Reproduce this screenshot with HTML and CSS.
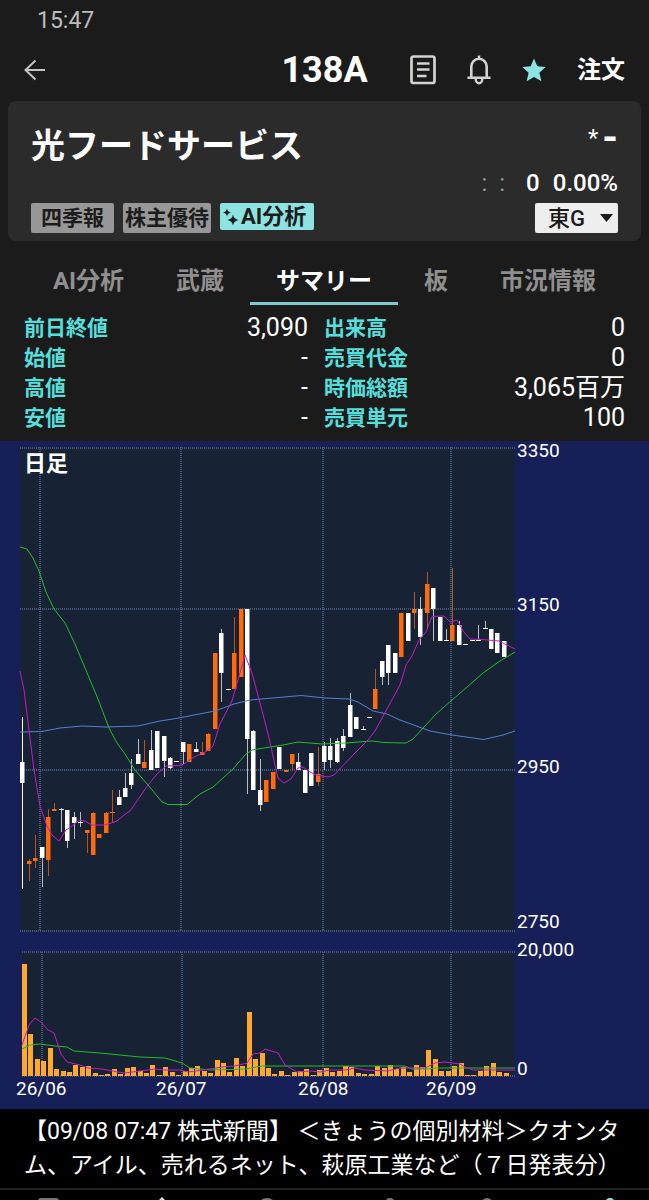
FILE: index.html
```html
<!DOCTYPE html>
<html lang="ja">
<head>
  <meta charset="UTF-8">
  <meta name="viewport" content="width=device-width, initial-scale=1">
  <title>138A 光フードサービス</title>
  <link rel="stylesheet" href="styles.css">
</head>
<body>
  <div class="status-bar">15:47</div>

  <header class="top-bar">
    <button class="icon-btn back-btn" aria-label="戻る">
      <svg width="22" height="22" viewBox="0 0 22 22"><path d="M21 11H1.5M11.500 1.500L1.500 11l10 9.500" fill="none" stroke="#c4c4c4" stroke-width="2"/></svg>
    </button>
    <h1 class="code">138A</h1>
    <div class="top-actions">
      <button class="icon-btn" aria-label="ニュース">
        <svg width="26" height="30" viewBox="0 0 26 30"><rect x="1.500" y="1.500" width="23" height="26.500" rx="2" fill="none" stroke="#d4d1d1" stroke-width="2.700"/><path d="M7 8.500h12.500M7 14.500h12.500M7 21h9.500" stroke="#d4d1d1" stroke-width="2.300"/></svg>
      </button>
      <button class="icon-btn" aria-label="アラート">
        <svg width="24" height="30" viewBox="0 0 24 30"><path d="M4.300 22V11.500a7.700 7.700 0 0 1 15.400 0V22M.5 22.800h23M12 .5v4" fill="none" stroke="#d4d1d1" stroke-width="2.600"/><path d="M8.700 24a3.300 4.200 0 0 0 6.600 0" fill="none" stroke="#d4d1d1" stroke-width="2.400"/></svg>
      </button>
      <button class="icon-btn" aria-label="お気に入り">
        <svg width="24" height="24" viewBox="0 0 24 24"><path d="M12 .5l3.300 7.700 8.400.8-6.300 5.700 2 8.600L12 18.900l-7.400 4.400 2-8.600L.3 9l8.400-.8z" fill="#8ce3e1"/></svg>
      </button>
      <button class="order-btn">注文</button>
    </div>
  </header>

  <section class="card">
    <div class="card-row">
      <h2 class="company">光フードサービス</h2>
      <div class="price"><span class="mark">*</span><span class="last">-</span></div>
    </div>
    <div class="change"><span class="time">:&nbsp; :</span><span>0</span><span>0.00%</span></div>
    <div class="card-row chips-row">
      <div class="chips">
        <button class="chip">四季報</button>
        <button class="chip chip-tight">株主優待</button>
        <button class="chip chip-ai">
          <svg width="16" height="18" viewBox="0 0 16 18"><path d="M4 .5Q4.500 4 8 4.500 4.500 5 4 8.500 3.500 5 0 4.500 3.500 4 4 .5zM10 6.500q.8 4.700 5.500 5.500-4.700.8-5.500 5.500-.8-4.700-5.500-5.500 4.700-.8 5.500-5.500z" fill="#1c1c1c"/></svg>AI分析
        </button>
      </div>
      <div class="market">
        <select aria-label="市場"><option>東G</option></select>
        <svg class="caret" width="13" height="8" viewBox="0 0 13 8"><path d="M0 0h13L6.500 8z" fill="#1c1c1c"/></svg>
      </div>
    </div>
  </section>

  <nav class="tabs">
    <button class="tab">AI分析</button>
    <button class="tab">武蔵</button>
    <button class="tab active">サマリー</button>
    <button class="tab">板</button>
    <button class="tab">市況情報</button>
  </nav>

  <div class="summary">
    <dl>
      <div><dt>前日終値</dt><dd>3,090</dd></div>
      <div><dt>始値</dt><dd>-</dd></div>
      <div><dt>高値</dt><dd>-</dd></div>
      <div><dt>安値</dt><dd>-</dd></div>
    </dl>
    <dl>
      <div><dt>出来高</dt><dd>0</dd></div>
      <div><dt>売買代金</dt><dd>0</dd></div>
      <div><dt>時価総額</dt><dd>3,065百万</dd></div>
      <div><dt>売買単元</dt><dd>100</dd></div>
    </dl>
  </div>

  <svg class="chart" viewBox="0 441 649 668">
    <rect class="plot" x="20" y="447" width="495" height="485"/>
    <rect class="plot" x="22" y="952" width="493" height="125"/>
    <path class="grid" d="M20 448H515M20 609H515M20 770H515M20 931H515M40 447V931M181 447V931M323 447V931M451 447V931"/>
    <path class="grid" d="M22 952H515M22 1076H515M42 952V1076M182 952V1076M323 952V1076M451 952V1076"/>
    <g id="candles"></g>
    <polyline class="line blue" points="20,732 42,731.500 60,728 82,726 106,727 138,726 160,721 176,718.500 215,711 234,704 250,700 301,695.500 325,698 349,699 358,702 373,711 387,714 400,720 430,731 452,735 484,739.500 503,735 515,731"/>
    <polyline class="line green" points="20,547 27,549 33,558 39,571 46,592 54,609 65,623 75,644 98,699 109,728 117,743 125,754 135,770 148,785 162,802 168,804.500 187,804.500 200,794 213,787 233,769 245,755 252,750 270,747 283,745 298,742 310,743 322,744 345,743 372,741 384,742.500 406,743 413,739 424,727 436,714 452,700 466,688 483,673 500,661 515,652"/>
    <polyline class="line magenta" points="20,671 24,690 28,722 34,770 40,806 47,826 52,835 59,841 66,830 72,826 79,820 85,821 92,825 105,825 117,821 124,815 130,811 148,785 157,774 166,766 180,765.500 184,764 194,757 207,751 213,746 220,724 232,701 245,655 252,673 265,722 270,742 276,770 278,778 284,783 291,779 298,768 303,767 310,772 316,775 328,777 334,775 353,755 367,741 375,731 400,685 406,665 412,656 419,640 426,632 432,616.500 444,616 450,622 457,620 463,631 470,639 482,639.500 499,641 515,649"/>
    <g id="volume"></g>
    <polyline class="line green" points="22,1049 30,1045 40,1044 55,1046 67,1047 74,1051 100,1053 120,1055 140,1057 165,1058 182,1063 190,1068 210,1070 245,1069 262,1066 340,1066 405,1066 412,1069 428,1069 435,1068 515,1068"/>
    <polyline class="line magenta" points="22,1045 29,1025 35,1018 41,1022 48,1030 54,1033 61,1054 67,1062 80,1065 88,1068 102,1069 118,1072 125,1073 140,1071 155,1069 165,1070 180,1070 188,1072 210,1069 222,1067 235,1066 247,1063 253,1054 260,1053 265,1049 278,1053 285,1065 297,1072 310,1071 320,1072 330,1070 345,1070 355,1068 365,1070 388,1071 400,1068 425,1068 435,1063 445,1062 460,1064 465,1067 473,1070 515,1070"/>
    <text class="period" x="24" y="471">日足</text>
    <g class="axis">
      <text x="517" y="457">3350</text>
      <text x="517" y="611">3150</text>
      <text x="517" y="773">2950</text>
      <text x="517" y="928">2750</text>
      <text x="517" y="956">20,000</text>
      <text x="517" y="1075">0</text>
      <text x="16" y="1095">26/06</text>
      <text x="156" y="1095">26/07</text>
      <text x="298" y="1095">26/08</text>
      <text x="426" y="1095">26/09</text>
    </g>
  </svg>

  <p class="news">【09/08 07:47 株式新聞】 ＜きょうの個別材料＞クオンタム、アイル、売れるネット、萩原工業など（７日発表分）</p>

  <div class="bottom-nav">
    <svg width="100%" height="10" viewBox="0 0 649 10" preserveAspectRatio="none">
      <g fill="#777">
        <rect x="38" y="8" width="21" height="6" rx="3"/>
        <circle cx="267" cy="18" r="10"/>
        <circle cx="390" cy="13" r="5"/>
        <circle cx="487" cy="14" r="6"/>
      </g>
      <path d="M162 7l3 3h-6z" fill="#ddd"/>
      <circle cx="610" cy="13" r="5" fill="#8ce3e1"/>
    </svg>
  </div>

  <script src="chart.js"></script>
</body>
</html>
```

FILE: styles.css
```css
* {
  box-sizing: border-box;
}
body {
  margin: 0;
  background-color: #1b1b1b;
  color: #fff;
  font-family: Roboto, "Noto Sans CJK JP", sans-serif;
}
h1, h2, p, dl, dd {
  margin: 0;
}
button {
  padding: 0;
  border: none;
  background: none;
  color: inherit;
  font-family: inherit;
  cursor: pointer;
}
svg {
  display: block;
}
.status-bar {
  height: 40px;
  padding-left: 37px;
  line-height: 41px;
  font-size: 23px;
  color: #bcbcbc;
}
/* Header */
.top-bar {
  display: grid;
  grid-template-columns: 1fr auto 1fr;
  align-items: center;
  height: 61px;
  padding: 0 24px 2px;
}
.back-btn {
  justify-self: start;
}
.code {
  font-size: 36px;
  line-height: 40px;
}
.top-actions {
  display: flex;
  justify-content: flex-end;
  align-items: center;
  gap: 31px;
}
.order-btn {
  font-size: 24px;
  font-weight: bold;
  line-height: 32px;
}
/* Stock card */
.card {
  margin: 0 8px;
  padding: 25px 23px 8px;
  border-radius: 8px;
  background-color: #2b2b2b;
}
.card-row {
  display: flex;
  justify-content: space-between;
}
.company {
  font-size: 34px;
  line-height: 40px;
}
.price {
  display: flex;
  gap: 4px;
  line-height: 24px;
}
.mark {
  font-size: 24px;
}
.last {
  font-size: 40px;
  font-weight: bold;
}
.change {
  display: flex;
  justify-content: flex-end;
  gap: 13px;
  font-size: 24px;
  font-weight: 500;
  line-height: 30px;
  padding-top: 2px;
}
.time {
  margin-right: 8px;
  font-weight: normal;
  color: #999;
}
.chips-row {
  padding-top: 5px;
}
.chips {
  display: flex;
  align-items: flex-start;
  gap: 9px;
}
.chip {
  height: 30px;
  padding: 0 10px;
  border-radius: 2px;
  background-color: #979797;
  color: #1c1c1c;
  font-size: 21px;
  font-weight: bold;
  line-height: 30px;
}
.chip-tight {
  padding: 0 2px;
}
.chip-ai {
  display: flex;
  align-items: center;
  gap: 2px;
  height: 27px;
  padding: 0 8px 0 3px;
  background-color: #8ce3e1;
  font-size: 22px;
  line-height: 27px;
}
.market {
  position: relative;
}
.market select {
  appearance: none;
  display: block;
  width: 83px;
  height: 30px;
  padding: 0 13px;
  border: none;
  border-radius: 2px;
  background-color: #eee;
  color: #1c1c1c;
  font-family: inherit;
  font-size: 22px;
  font-weight: 500;
}
.caret {
  position: absolute;
  right: 5px;
  top: 11px;
}
/* Tabs */
.tabs {
  display: flex;
  justify-content: center;
  height: 64px;
  padding-top: 14px;
}
.tab {
  padding: 0 26px;
  border-bottom: 3px solid transparent;
  color: #8f8f8f;
  font-size: 24px;
  font-weight: bold;
}
.tab.active {
  color: #fff;
  border-color: #7fc9c9;
}
/* Summary */
.summary {
  display: grid;
  grid-template-columns: 284px 1fr;
  gap: 16px;
  padding: 8px 24px;
}
.summary dl > div {
  display: flex;
  justify-content: space-between;
  height: 30px;
  line-height: 30px;
}
.summary dt {
  font-size: 21px;
  font-weight: bold;
  color: #55dfdc;
}
.summary dd {
  font-size: 25px;
}
/* Chart */
.chart {
  width: 100%;
  height: auto;
  overflow: visible;
  background-color: #161f58;
}
.plot {
  fill: #172335;
}
.grid {
  stroke: #46587b;
  stroke-width: 2;
  stroke-dasharray: 1 1;
}
.line {
  fill: none;
  stroke-width: 1;
}
.blue {
  stroke: #567fd0;
}
.green {
  stroke: #1fbd25;
}
.magenta {
  stroke: #c31bc9;
}
.up {
  fill: #ff6a0a;
}
.down {
  fill: #fff;
}
.wick {
  opacity: 0.7;
}
.bar {
  fill: #ffa92b;
}
.period {
  fill: #fff;
  font-size: 22px;
  font-weight: bold;
}
.axis {
  fill: #fff;
  font-size: 19px;
}
/* News ticker */
.news {
  padding: 6px 16px 5px 24px;
  background-color: #000;
  font-size: 23px;
  line-height: 34px;
}
.bottom-nav {
  border-top: 2px solid #222;
  background-color: #000;
}
```

FILE: chart.js
```js
const SVG_NS = "http://www.w3.org/2000/svg";
const STEP = 6.42;

// [direction, high, body top, body bottom, low], one entry per day
const candles = [
  ["down", 717, 762, 783, 889], ["up", 859, 861, 864, 881], ["up", 835, 858, 861, 868],
  ["down", 847, 847, 858, 887], ["up", 809, 817, 860, 876], ["up", 803, 809, 811, 811],
  ["down", 808, 809, 810, 832], ["down", 810, 810, 841, 848], ["down", 812, 817, 823, 839],
  ["down", 812, 822, 823, 827], ["up", 830, 830, 833, 853], ["up", 812, 813, 855, 855],
  ["up", 834, 834, 838, 838], ["up", 812, 813, 833, 833], ["up", 790, 812, 813, 823],
  ["down", 790, 797, 805, 805], ["down", 773, 788, 797, 797], ["down", 759, 773, 785, 789],
  ["down", 739, 754, 764, 764], ["up", 740, 762, 768, 768], ["down", 730, 750, 770, 770],
  ["down", 731, 731, 768, 768], ["down", 736, 736, 761, 777], ["down", 757, 758, 768, 769],
  ["down", 761, 761, 762, 762], ["down", 742, 742, 752, 764], ["up", 744, 744, 762, 762],
  ["down", 742, 749, 752, 752], ["up", 742, 752, 755, 755], ["up", 733, 734, 751, 751],
  ["up", 653, 653, 729, 729], ["down", 629, 633, 673, 702], ["down", 689, 689, 690, 690],
  ["up", 617, 653, 689, 689], ["up", 609, 609, 677, 677], ["down", 609, 609, 739, 794],
  ["down", 730, 731, 790, 790], ["down", 759, 790, 805, 811], ["up", 780, 780, 802, 802],
  ["up", 772, 772, 789, 789], ["down", 747, 747, 769, 769], ["up", 770, 770, 772, 772],
  ["up", 754, 754, 764, 770], ["down", 753, 762, 770, 770], ["down", 770, 770, 793, 793],
  ["down", 753, 753, 786, 786], ["up", 747, 774, 782, 786], ["down", 742, 746, 762, 770],
  ["down", 738, 746, 760, 768], ["down", 738, 741, 762, 763], ["down", 729, 736, 748, 751],
  ["down", 693, 705, 737, 737], ["down", 717, 717, 729, 729], ["down", 726, 729, 730, 730],
  ["down", 717, 717, 718, 718], ["up", 669, 689, 709, 709], ["down", 661, 661, 677, 685],
  ["down", 645, 645, 673, 685], ["down", 653, 653, 673, 673], ["up", 613, 613, 657, 657],
  ["down", 613, 613, 641, 641], ["up", 592, 609, 613, 629], ["down", 597, 609, 637, 645],
  ["up", 572, 584, 613, 629], ["down", 588, 588, 609, 641], ["down", 617, 617, 641, 641],
  ["down", 629, 640, 641, 641], ["up", 568, 625, 641, 641], ["down", 621, 625, 645, 645],
  ["down", 644, 644, 645, 645], ["down", 640, 640, 641, 641], ["down", 625, 640, 641, 641],
  ["down", 621, 628, 629, 629], ["down", 629, 629, 649, 649], ["down", 633, 633, 653, 653],
  ["down", 641, 641, 657, 657]
];

const volumes = [
  112, 42, 17, 15, 28, 7, 5, 4, 11, 9, 10, 3, 1, 2, 7, 2, 8, 9, 5, 3, 11, 1, 9, 4, 1,
  5, 8, 10, 5, 3, 16, 13, 4, 18, 10, 64, 17, 23, 8, 2, 5, 1, 4, 5, 7, 1, 6, 8, 4, 5,
  10, 9, 3, 2, 2, 10, 8, 11, 7, 9, 4, 11, 9, 26, 17, 5, 5, 10, 13, 1, 1, 5, 10, 13, 4, 3
];

function addRect(parent, className, x, y, width, height) {
  const rect = document.createElementNS(SVG_NS, "rect");
  rect.setAttribute("class", className);
  rect.setAttribute("x", x);
  rect.setAttribute("y", y);
  rect.setAttribute("width", width);
  rect.setAttribute("height", height);
  parent.appendChild(rect);
}

const candleGroup = document.getElementById("candles");
candles.forEach(([dir, high, top, bottom, low], i) => {
  const x = Math.round(20.3 + i * STEP);
  addRect(candleGroup, dir + " wick", x + 2, high, 1, low - high);
  addRect(candleGroup, dir, x, top, bottom - top > 1 ? 4.5 : 5, bottom - top);
});
// first day's wick is drawn solid
candleGroup.firstChild.classList.remove("wick");

const volumeGroup = document.getElementById("volume");
volumes.forEach((v, i) => {
  addRect(volumeGroup, "bar", Math.round(22 + i * STEP), 1076 - v, 5, v);
});
```
